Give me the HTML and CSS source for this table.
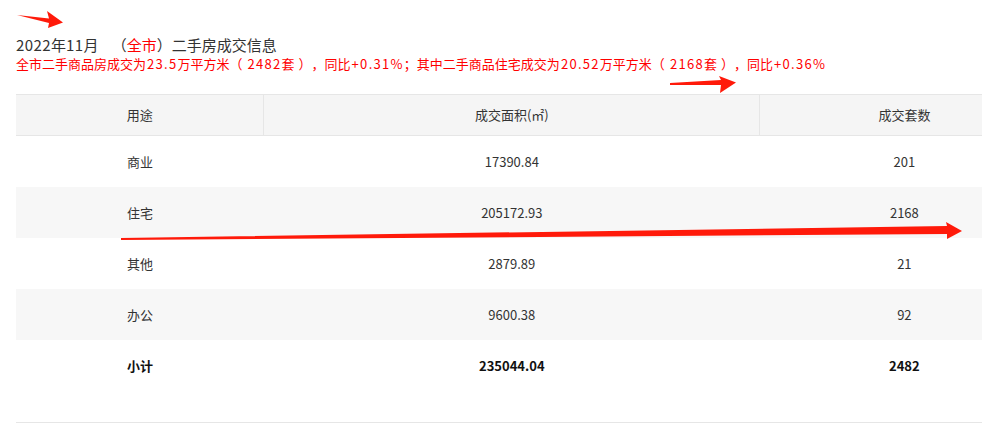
FILE: index.html
```html
<!DOCTYPE html>
<html lang="zh-CN">
<head>
<meta charset="utf-8">
<title>二手房成交信息</title>
<link rel="stylesheet" href="styles.css">
</head>
<body>
<div class="page">
  <h2 class="title"><span class="tn">2022</span>年<span class="tn">11</span>月&nbsp;&nbsp;&nbsp;&nbsp;（<span class="red">全市</span>）二手房成交信息</h2>
  <p class="summary">全市二手商品房成交为<span class="n">23.5</span>万平方米（<span class="n in">2482</span>套<span class="cp">）</span>，同比<span class="n">+0.31%</span>；其中二手商品住宅成交为<span class="n">20.52</span>万平方米（<span class="n in">2168</span>套<span class="cp">）</span>，同比<span class="n">+0.36%</span></p>
  <table class="data">
    <colgroup><col class="c1"><col class="c2"><col class="c3"></colgroup>
    <thead>
      <tr><th>用途</th><th>成交面积(㎡)</th><th>成交套数</th></tr>
    </thead>
    <tbody>
      <tr><td>商业</td><td>17390.84</td><td>201</td></tr>
      <tr class="alt"><td>住宅</td><td>205172.93</td><td>2168</td></tr>
      <tr><td>其他</td><td>2879.89</td><td>21</td></tr>
      <tr class="alt"><td>办公</td><td>9600.38</td><td>92</td></tr>
      <tr class="total"><td>小计</td><td>235044.04</td><td>2482</td></tr>
    </tbody>
  </table>
  <div class="rule"></div>
</div>
<svg class="arrows" width="982" height="428" viewBox="0 0 982 428">
  <polygon fill="#ff1a0a" points="17,15 49,18.5 47,11 63,22.5 48,28 49,23"/>
  <polygon fill="#ff1a0a" points="670,83 721,80 719,76 736,82.5 720,93 721,85 670,85"/>
  <polygon fill="#ff1a0a" points="121,238 947,226 946,222 962,231 947,239 947,234 121,240"/>
</svg>
</body>
</html>
```
FILE: styles.css
```css
html, body {
  margin: 0;
  padding: 0;
  background: #fff;
  overflow: hidden;
}
body {
  width: 982px;
  height: 428px;
  position: relative;
  font-family: "Noto Sans CJK SC", "Noto Sans", sans-serif;
  color: #333;
  text-spacing-trim: space-all;
}
.page {
  padding: 35px 0 0 16px;
}
.title {
  margin: 0;
  font-size: 15px;
  line-height: 20px;
  font-weight: normal;
  color: #333;
}
.title .tn { letter-spacing: 0.4px; }
.red { color: #ff0000; }
.summary {
  margin: 0;
  font-size: 13px;
  line-height: 18px;
  color: #ff0000;
  white-space: nowrap;
}
.summary .n {
  letter-spacing: 1.3px;
  margin: 0 0 0 1px;
}
.summary .n.in { margin-left: 5px; }
.summary .cp { margin-left: 4px; }
.data {
  margin-top: 21px;
  width: 1033px;
  table-layout: fixed;
  border-collapse: collapse;
  font-size: 13px;
}
.c1 { width: 24%; }
.c2 { width: 48%; }
.c3 { width: 28%; }
.data th {
  height: 38px;
  padding: 0 0 2px;
  background: #f5f5f5;
  border-top: 1px solid #e6e6e6;
  border-bottom: 1px solid #e6e6e6;
  border-left: 1px solid #e6e6e6;
  font-weight: normal;
  color: #333;
  text-align: center;
}
.data th:first-child { border-left: none; }
.data td {
  height: 50px;
  padding: 0 0 1px;
  text-align: center;
  color: #333;
}
.data tr.alt td { background: #f7f7f7; }
.data tr.total td { font-weight: bold; color: #111; }
.rule {
  margin-top: 31px;
  border-top: 1px solid #e6e6e6;
}
.arrows {
  position: absolute;
  left: 0;
  top: 0;
  pointer-events: none;
}
```
